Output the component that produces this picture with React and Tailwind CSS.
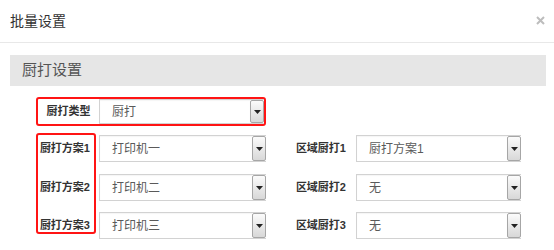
import React from 'react';

const FONT = { fontFamily: '"Liberation Sans", "Noto Sans CJK SC", sans-serif' };

function Arrow() {
  return (
    <svg width="7" height="4" viewBox="0 0 7 4" className="block">
      <polygon points="0,0 7,0 3.5,4" fill="#222" />
    </svg>
  );
}

function Select({ value, className = '' }) {
  return (
    <div className={`flex items-stretch bg-white border-y border-l border-[#d2d2d2] ${className}`}>
      <div className="flex-1 flex items-center pl-[12px] text-[12px] text-[#5a5a5a] shadow-[inset_0_1px_1px_rgba(0,0,0,0.04)]">
        {value}
      </div>
      <div className="w-[14px] flex items-center justify-center border border-[#a6a6a6] rounded-[2px] bg-gradient-to-b from-[#fbfbfb] to-[#d8d8d8]">
        <Arrow />
      </div>
    </div>
  );
}

const ROWS = [
  { label: '厨打方案1', value: '打印机一', area: '区域厨打1', areaValue: '厨打方案1', mt: '' },
  { label: '厨打方案2', value: '打印机二', area: '区域厨打2', areaValue: '无', mt: 'mt-[12px]' },
  { label: '厨打方案3', value: '打印机三', area: '区域厨打3', areaValue: '无', mt: 'mt-[11px]' },
];

export default function App() {
  return (
    <div className="w-[554px] h-[250px] bg-white overflow-hidden" style={FONT}>
      <div className="h-[43px] flex items-center justify-between pl-[10px] pr-[9px] border-b border-[#e8e8e8]">
        <span className="text-[14px] text-[#333]">批量设置</span>
        <svg width="9" height="9" viewBox="0 0 9 9" className="mb-[1px]">
          <path d="M1 1L8 8M8 1L1 8" stroke="#bdbdbd" strokeWidth="2" />
        </svg>
      </div>

      <div className="mt-[12px] ml-[10px] w-[536px] h-[31px] bg-[#e6e6e6] flex items-center pl-[12px] text-[15px] text-[#555]">
        厨打设置
      </div>

      <div className="mt-[11px] ml-[36px] w-[230px] h-[29px] border-2 border-[#ff1414] rounded-[3px] flex">
        <div className="w-[61px] flex items-center justify-center text-[11px] font-bold text-[#333]">厨打类型</div>
        <Select value="厨打" className="flex-1 h-full" />
      </div>

      <div className="relative mt-[9px] ml-[36px]">
        <div className="absolute left-0 top-[-2px] w-[60px] h-[101px] border-2 border-[#ff1414] rounded-[3px] pointer-events-none" />
        {ROWS.map((r) => (
          <div key={r.label} className={`flex items-center h-[27px] ${r.mt}`}>
            <div className="w-[63px] text-right pr-[9px] text-[11px] font-bold text-[#333]">{r.label}</div>
            <Select value={r.value} className="w-[167px] h-full" />
            <div className="w-[90px] text-right pr-[10px] text-[11px] font-bold text-[#333]">{r.area}</div>
            <Select value={r.areaValue} className="w-[165px] h-full" />
          </div>
        ))}
      </div>
    </div>
  );
}
